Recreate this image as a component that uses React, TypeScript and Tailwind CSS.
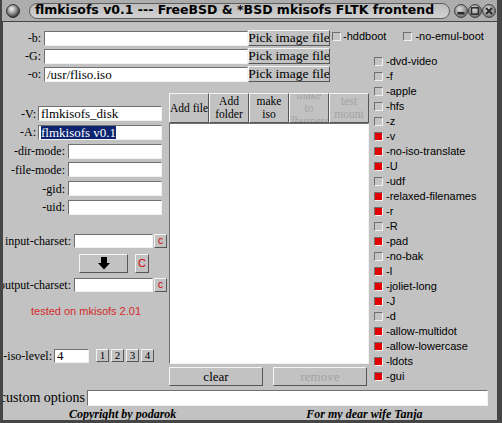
import React from "react";

const serif = "font-['Liberation_Serif',serif]";
const sans = "font-['Liberation_Sans',sans-serif]";
const sunken =
  "border border-t-[#6f6f6f] border-l-[#6f6f6f] border-b-[#f2f2f2] border-r-[#f2f2f2]";
const raised =
  "border border-t-[#f4f4f4] border-l-[#f4f4f4] border-b-[#575757] border-r-[#575757]";

const options: [string, boolean][] = [
  ["-dvd-video", false],
  ["-f", false],
  ["-apple", false],
  ["-hfs", false],
  ["-z", false],
  ["-v", true],
  ["-no-iso-translate", true],
  ["-U", true],
  ["-udf", false],
  ["-relaxed-filenames", true],
  ["-r", true],
  ["-R", false],
  ["-pad", true],
  ["-no-bak", false],
  ["-l", true],
  ["-joliet-long", true],
  ["-J", true],
  ["-d", false],
  ["-allow-multidot", true],
  ["-allow-lowercase", true],
  ["-ldots", true],
  ["-gui", true],
];

const Field: React.FC<{ value?: string; selected?: boolean; className?: string }> = ({
  value = "",
  selected = false,
  className = "",
}) => (
  <div
    className={`h-[15px] shrink-0 bg-white ${sunken} flex items-center pl-[2px] overflow-hidden whitespace-nowrap text-[13px] leading-none text-black ${serif} ${className}`}
  >
    {selected ? <span className="bg-[#0a2470] text-white">{value}</span> : value}
  </div>
);

const Box: React.FC<{ on?: boolean }> = ({ on = false }) => (
  <span className={`w-[9px] h-[9px] shrink-0 ${sunken} ${on ? "bg-[#e20000]" : "bg-[#c4c4c4]"}`} />
);

const Check: React.FC<{ label: string; on?: boolean }> = ({ label, on = false }) => (
  <div className="flex items-center h-[15px] shrink-0">
    <Box on={on} />
    <span className={`ml-[3px] text-[11px] leading-none whitespace-nowrap ${sans}`}>{label}</span>
  </div>
);

const FileRow: React.FC<{ label: string; value?: string; children?: React.ReactNode }> = ({
  label,
  value = "",
  children,
}) => (
  <div className="flex items-center h-[16px]">
    <div className="w-[41px] shrink-0 flex justify-end pr-[3px] text-[12px] leading-none whitespace-nowrap">
      {label}
    </div>
    <Field className="w-[204px]" value={value} />
    <div
      className={`w-[82px] h-[16px] shrink-0 ${raised} bg-[#c2c2c2] flex items-center justify-center overflow-hidden whitespace-nowrap text-[13.5px] leading-none`}
    >
      Pick image file
    </div>
    {children}
  </div>
);

const TitleBar: React.FC = () => (
  <div className="h-[21px] shrink-0 mr-[5px] flex items-center bg-[#adadad] border-l-[2px] border-[#454545]">
    <svg width="14" height="14" viewBox="0 0 14 14" className="ml-[4px] shrink-0">
      <defs>
        <radialGradient id="ball" cx="40%" cy="35%" r="65%">
          <stop offset="0%" stopColor="#f4f4f4" />
          <stop offset="45%" stopColor="#a4a4a4" />
          <stop offset="100%" stopColor="#363636" />
        </radialGradient>
      </defs>
      <circle cx="7" cy="7" r="6.4" fill="url(#ball)" stroke="#2a2a2a" strokeWidth="1" />
    </svg>
    <div className="ml-[9px] w-[421px] h-[16px] shrink-0 rounded-full border border-[#5e5e5e] bg-linear-to-b from-[#bdbdbd] to-[#d2d2d2] flex items-center pl-[5px] overflow-hidden whitespace-nowrap text-[12.5px] leading-none font-bold text-black font-['DejaVu_Sans',sans-serif]">
      flmkisofs v0.1 --- FreeBSD &amp; *BSD mkisofs FLTK frontend
    </div>
    <svg width="42" height="16" viewBox="0 0 42 16" className="ml-[4px] shrink-0">
      <defs>
        <radialGradient id="bub" cx="40%" cy="35%" r="70%">
          <stop offset="0%" stopColor="#dcdcdc" />
          <stop offset="100%" stopColor="#6e6e6e" />
        </radialGradient>
      </defs>
      {[7, 21, 35].map((cx) => (
        <circle key={cx} cx={cx} cy="8" r="6.4" fill="url(#bub)" stroke="#3a3a3a" strokeWidth="1" />
      ))}
      <rect x="3.5" y="9" width="7" height="2.5" fill="#2a2a2a" />
      <rect x="17.5" y="4.8" width="7" height="6.4" fill="none" stroke="#2a2a2a" strokeWidth="1.5" />
      <path d="M32 5 L38 11 M38 5 L32 11" stroke="#2a2a2a" strokeWidth="2" />
    </svg>
  </div>
);

const tabs = [
  { text: "Add file", off: false },
  { text: "Add\nfolder", off: false },
  { text: "make\niso", off: false },
  { text: "make\nto\nflburnerd", off: true },
  { text: "test\nmount", off: true },
];

const App: React.FC = () => {
  return (
    <div className="w-[502px] h-[423px] flex flex-col bg-[#454545] overflow-hidden">
      <TitleBar />

      <div
        className={`flex-1 min-h-0 ml-[3px] mr-[5px] mb-[3px] mt-[1px] bg-[#c2c2c2] overflow-hidden flex flex-col text-black ${serif}`}
      >
        <div className="flex">
          {/* Columna principal */}
          <div className="w-[367px] shrink-0 flex flex-col pt-[8px]">
            <div className="flex flex-col gap-[2px]">
              <FileRow label="-b:">
                <div className="flex items-center shrink-0 mb-[4px]">
                  <span className="ml-[2px]" />
                  <Box />
                  <span className={`ml-[2px] text-[11px] leading-none whitespace-nowrap ${sans}`}>-hddboot</span>
                  <span className="ml-[17px]" />
                  <Box />
                  <span className={`ml-[3px] text-[11px] leading-none whitespace-nowrap ${sans}`}>-no-emul-boot</span>
                </div>
              </FileRow>
              <FileRow label="-G:" />
              <FileRow label="-o:" value="/usr/fliso.iso" />
            </div>

            <div className="flex mt-[11px]">
              {/* Panel izquierdo */}
              <div className="w-[166px] shrink-0 flex flex-col pt-[13px] text-[12px] leading-none">
                <div className="flex flex-col gap-[3.8px]">
                  <div className="flex items-center">
                    <div className="w-[35px] shrink-0 flex justify-end pr-[2px] whitespace-nowrap">-V:</div>
                    <Field className="w-[124px]" value="flmkisofs_disk" />
                  </div>
                  <div className="flex items-center">
                    <div className="w-[35px] shrink-0 flex justify-end pr-[2px] whitespace-nowrap">-A:</div>
                    <Field className="w-[124px]" value="flmkisofs v0.1" selected />
                  </div>
                  <div className="flex items-center">
                    <div className="w-[65px] shrink-0 flex justify-end pr-[3px] whitespace-nowrap">-dir-mode:</div>
                    <Field className="w-[94px]" />
                  </div>
                  <div className="flex items-center">
                    <div className="w-[65px] shrink-0 flex justify-end pr-[3px] whitespace-nowrap">-file-mode:</div>
                    <Field className="w-[94px]" />
                  </div>
                  <div className="flex items-center">
                    <div className="w-[65px] shrink-0 flex justify-end pr-[3px] whitespace-nowrap">-gid:</div>
                    <Field className="w-[94px]" />
                  </div>
                  <div className="flex items-center">
                    <div className="w-[65px] shrink-0 flex justify-end pr-[3px] whitespace-nowrap">-uid:</div>
                    <Field className="w-[94px]" />
                  </div>
                </div>

                {/* Charsets */}
                <div className="flex items-center h-[14px] mt-[19px]">
                  <div className="w-[71px] shrink-0 flex justify-end pr-[3px] whitespace-nowrap">input-charset:</div>
                  <Field className="w-[79px] !h-[14px]" />
                  <div className={`ml-[1px] w-[13px] h-[14px] shrink-0 ${raised} bg-[#c2c2c2] flex items-center justify-center text-[10px] text-[#d40000] ${sans}`}>
                    c
                  </div>
                </div>
                <div className="flex items-center h-[19px] mt-[6px]">
                  <div className={`ml-[76px] w-[49px] h-[19px] shrink-0 ${raised} bg-[#c2c2c2] flex items-center justify-center`}>
                    <svg width="12" height="13" viewBox="0 0 12 13">
                      <path d="M3 0 H9 V6 H12 L6 12.5 L0 6 H3 Z" fill="#000000" />
                    </svg>
                  </div>
                  <div className={`ml-[7px] w-[14px] h-[19px] shrink-0 ${raised} bg-[#c2c2c2] flex items-center justify-center text-[11px] text-[#d40000] ${sans}`}>
                    C
                  </div>
                </div>
                <div className="flex items-center h-[14px] mt-[5px]">
                  <div className="w-[71px] shrink-0 flex justify-end pr-[3px] whitespace-nowrap">output-charset:</div>
                  <Field className="w-[79px] !h-[14px]" />
                  <div className={`ml-[1px] w-[13px] h-[14px] shrink-0 ${raised} bg-[#c2c2c2] flex items-center justify-center text-[10px] text-[#d40000] ${sans}`}>
                    c
                  </div>
                </div>

                <div className={`h-[14px] mt-[13px] flex items-center justify-center text-[11px] text-[#d32b2b] ${sans}`}>
                  tested on mkisofs 2.01
                </div>

                {/* iso level */}
                <div className="flex items-center h-[14px] mt-[30px]">
                  <div className="w-[51px] shrink-0 flex justify-end pr-[2px] whitespace-nowrap">-iso-level:</div>
                  <Field className="w-[35px] !h-[14px]" value="4" />
                  <div className="ml-[7px] flex gap-[2px]">
                    {["1", "2", "3", "4"].map((n) => (
                      <div
                        key={n}
                        className={`w-[13px] h-[13px] shrink-0 ${raised} bg-[#c2c2c2] flex items-center justify-center text-[11px]`}
                      >
                        {n}
                      </div>
                    ))}
                  </div>
                </div>
              </div>

              {/* Panel central */}
              <div className="w-[200px] shrink-0 flex flex-col">
                <div className="flex h-[30px]">
                  {tabs.map((t) => (
                    <div
                      key={t.text}
                      className={`w-[40px] h-[30px] shrink-0 ${raised} bg-[#c2c2c2] flex items-center justify-center overflow-hidden whitespace-pre-line text-center text-[11.5px] leading-[13px] ${
                        t.off ? "text-[#a2a2a2]" : "text-black"
                      }`}
                    >
                      {t.text}
                    </div>
                  ))}
                </div>
                <div className={`h-[241px] bg-white ${sunken}`} />
                <div className="flex gap-[10px] mt-[3px] h-[19px]">
                  <div className={`w-[94px] h-[19px] ${raised} bg-[#c2c2c2] flex items-center justify-center text-[13px] leading-none`}>
                    clear
                  </div>
                  <div className={`w-[94px] h-[19px] ${raised} bg-[#c2c2c2] flex items-center justify-center text-[13px] leading-none text-[#a2a2a2]`}>
                    remove
                  </div>
                </div>
              </div>
            </div>
          </div>

          {/* Opciones */}
          <div className="flex-1 flex flex-col pt-[32px] pl-[4px]">
            {options.map(([label, on]) => (
              <Check key={label} label={label} on={on} />
            ))}
          </div>
        </div>

        {/* custom options */}
        <div className="flex items-center h-[16px] mt-[4px]">
          <div className="w-[84px] shrink-0 flex justify-end pr-[2px] whitespace-nowrap text-[14px] leading-none">
            custom options
          </div>
          <Field className="w-[401px] !h-[16px]" />
        </div>

        <div className="flex items-center h-[14px] mt-[1px] text-[12px] leading-none italic font-bold whitespace-nowrap">
          <span className="ml-[66px]">Copyright by podarok</span>
          <span className="ml-[130px]">For my dear wife Tanja</span>
        </div>
      </div>
    </div>
  );
};

export default App;
